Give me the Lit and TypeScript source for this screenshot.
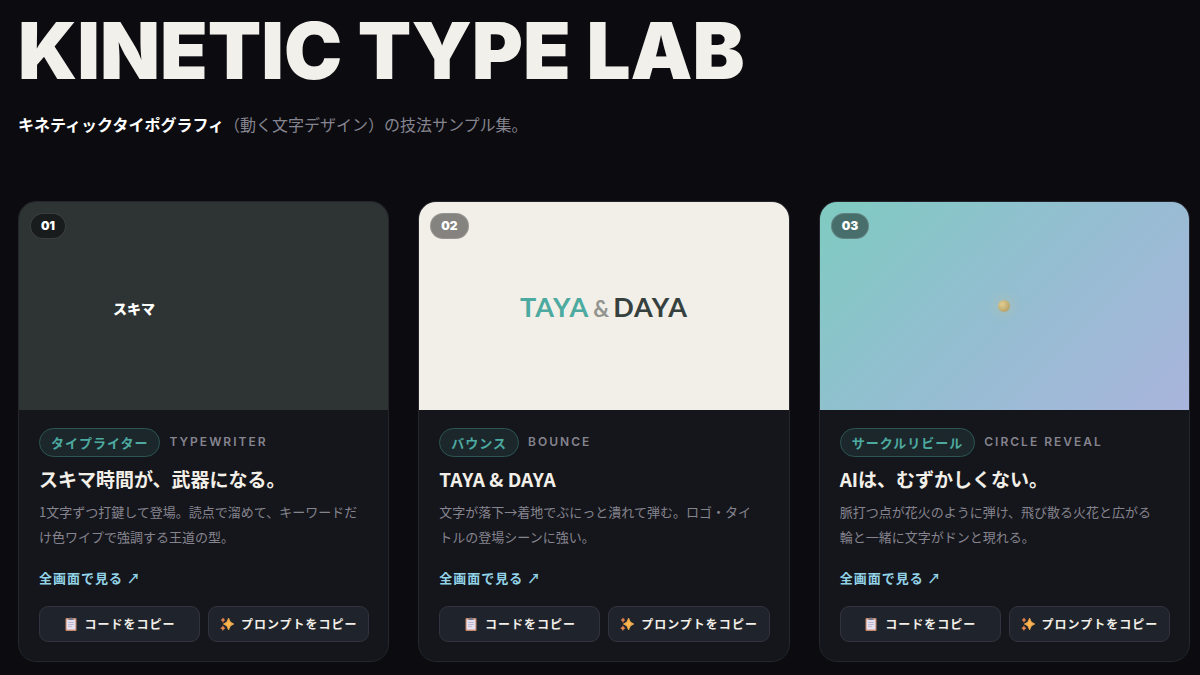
import { LitElement, html, css, svg, type TemplateResult } from "lit";
import { customElement, property } from "lit/decorators.js";

interface Sample {
  no: string;
  tag: string;
  label: string;
  title: string;
  text: string;
  theme: string;
  stage: TemplateResult;
}

const samples: Sample[] = [
  {
    no: "01",
    tag: "タイプライター",
    label: "TYPEWRITER",
    title: "スキマ時間が、武器になる。",
    text: "1文字ずつ打鍵して登場。読点で溜めて、キーワードだけ色ワイプで強調する王道の型。",
    theme: "slate",
    stage: html`<div class="typed">スキマ</div>`,
  },
  {
    no: "02",
    tag: "バウンス",
    label: "BOUNCE",
    title: "TAYA & DAYA",
    text: "文字が落下→着地でぶにっと潰れて弾む。ロゴ・タイトルの登場シーンに強い。",
    theme: "paper",
    stage: html`<div class="duo"><span class="first">TAYA</span><span class="amp">&amp;</span><span>DAYA</span></div>`,
  },
  {
    no: "03",
    tag: "サークルリビール",
    label: "CIRCLE REVEAL",
    title: "AIは、むずかしくない。",
    text: "脈打つ点が花火のように弾け、飛び散る火花と広がる輪と一緒に文字がドンと現れる。",
    theme: "sky",
    stage: html`<div class="dot"></div>`,
  },
];

const clipboard = html`<svg class="icon" viewBox="0 0 14 14" aria-hidden="true">
  ${svg`<rect x="1.5" y="1" width="11" height="13" rx="1" fill="#c98a6c"/>
  <rect x="2.6" y="2.4" width="8.8" height="10.2" fill="#e6dff0"/>
  <path d="M4.4 2.9V1.7h1.5a1.1 1.1 0 0 1 2.2 0h1.5v1.2z" fill="#77768a"/>
  <path d="M4.2 5.5h5.6M4.2 7.5h5.6M4.2 9.5h3.6" stroke="#aaa3bd" stroke-width=".7"/>`}
</svg>`;

const sparkles = html`<svg class="icon" viewBox="0 0 14 14" aria-hidden="true">
  ${svg`<path d="M8.6 1.2Q9.3 6 13.7 7 9.3 8 8.6 12.8 7.9 8 3.5 7 7.9 6 8.6 1.2z" fill="#fdb44f" stroke="#fdb44f" stroke-width=".9" stroke-linejoin="round"/>
  <path d="M3 .8Q3.3 2.7 5 3.1 3.3 3.5 3 5.4 2.7 3.5 1 3.1 2.7 2.7 3 .8z" fill="#f28b50" stroke="#f28b50" stroke-width=".4"/>
  <path d="M2.9 8.8Q3.2 10.8 5.2 11.2 3.2 11.6 2.9 13.6 2.6 11.6.6 11.2 2.6 10.8 2.9 8.8z" fill="#f28b50" stroke="#f28b50" stroke-width=".4"/>`}
</svg>`;

@customElement("sample-card")
export class SampleCard extends LitElement {
  @property({ attribute: false }) sample!: Sample;

  static styles = css`
    :host {
      display: block;
      min-width: 0;
    }
    .card {
      box-sizing: border-box;
      height: 100%;
      border: 1px solid #25262d;
      border-radius: 18px;
      background: #15161b;
      overflow: hidden;
    }
    .preview {
      position: relative;
      aspect-ratio: 16 / 9;
      display: grid;
      align-items: center;
    }
    .slate { background: #2d3433; }
    .paper { background: #f2efe8; }
    .sky { background: linear-gradient(135deg, #7fcbc1 0%, #92bfd0 45%, #a9b4dc 100%); }
    .badge {
      position: absolute;
      top: 11px;
      left: 11px;
      padding: 0 10px;
      border: 1px solid rgba(255, 255, 255, 0.14);
      border-radius: 13px;
      background: rgba(0, 0, 0, 0.45);
      color: #fff;
      font: 900 12px/24px Inter, sans-serif;
    }
    .typed {
      padding-left: 94px;
      padding-top: 4px;
      color: #fff;
      font-size: 14px;
      font-weight: 900;
    }
    .duo {
      display: flex;
      justify-content: center;
      align-items: baseline;
      gap: 4px;
      padding-top: 5px;
      color: #36413f;
      font: 700 27px/32px Lato, sans-serif;
      letter-spacing: 1px;
    }
    .first { color: #4caaa0; }
    .amp { color: #92948f; font-size: 22px; letter-spacing: 0; }
    .dot {
      justify-self: center;
      width: 12px;
      height: 12px;
      border-radius: 50%;
      background: radial-gradient(circle at 35% 35%, #e3cd90, #bfab70 60%, #a59668);
      box-shadow: 0 0 12px 2px rgba(215, 200, 130, 0.35);
    }
    .body {
      padding: 18px 19px 19px 20px;
    }
    .meta {
      display: flex;
      align-items: center;
      gap: 9px;
    }
    .tag {
      padding: 0 11px;
      border: 1px solid #2b5653;
      border-radius: 15px;
      background: #1c272c;
      color: #4caaa0;
      font-size: 13px;
      line-height: 27px;
      font-weight: 700;
      letter-spacing: 1px;
      white-space: nowrap;
    }
    .label {
      color: #85848f;
      font: 600 12px/20px Inter, sans-serif;
      letter-spacing: 2px;
      white-space: nowrap;
    }
    h2 {
      margin: 7px 0 5px;
      color: #f2efe8;
      font-size: 19px;
      line-height: 30px;
      font-weight: 700;
    }
    p {
      margin: 0;
      max-width: 320px;
      color: #85848f;
      font-size: 13px;
      line-height: 25px;
    }
    a {
      display: inline-block;
      margin-top: 18px;
      color: #93d3e8;
      font-size: 13px;
      line-height: 22px;
      font-weight: 700;
      letter-spacing: 1px;
      text-decoration: none;
    }
    .actions {
      display: grid;
      grid-template-columns: 1fr 1fr;
      gap: 8px;
      margin-top: 17px;
    }
    button {
      display: flex;
      align-items: center;
      justify-content: center;
      gap: 7px;
      height: 36px;
      padding: 0;
      border: 1px solid #32333e;
      border-radius: 9px;
      background: #1f232b;
      color: #f2efe8;
      font: 700 12px/20px "Noto Sans CJK JP", sans-serif;
      letter-spacing: 1px;
      white-space: nowrap;
    }
    .icon {
      width: 14px;
      height: 14px;
    }
  `;

  render() {
    const s = this.sample;
    return html`
      <article class="card">
        <div class="preview ${s.theme}">
          <span class="badge">${s.no}</span>
          ${s.stage}
        </div>
        <div class="body">
          <div class="meta"><span class="tag">${s.tag}</span><span class="label">${s.label}</span></div>
          <h2>${s.title}</h2>
          <p>${s.text}</p>
          <a href="#sample-${s.no}">全画面で見る ↗</a>
          <div class="actions">
            <button type="button">${clipboard}<span>コードをコピー</span></button>
            <button type="button">${sparkles}<span>プロンプトをコピー</span></button>
          </div>
        </div>
      </article>
    `;
  }
}

@customElement("app-root")
export class AppRoot extends LitElement {
  static styles = css`
    :host {
      display: block;
      box-sizing: border-box;
      min-height: 100vh;
      padding: 12px 10px 13px 18px;
      background: #0b0b10;
      font-family: "Noto Sans CJK JP", sans-serif;
    }
    h1 {
      margin: 0;
      color: #f2f0ea;
      font: 900 78px/78px Inter, sans-serif;
      font-optical-sizing: none;
    }
    .lead {
      margin: 19px 0 62px;
      color: #85848f;
      font-size: 16px;
      line-height: 30px;
    }
    strong {
      color: #fff;
      font-weight: 700;
    }
    .grid {
      display: grid;
      grid-template-columns: repeat(3, minmax(0, 1fr));
      gap: 29px;
    }
  `;

  render() {
    return html`
      <header>
        <h1>KINETIC TYPE LAB</h1>
        <p class="lead"><strong>キネティックタイポグラフィ</strong>（動く文字デザイン）の技法サンプル集。</p>
      </header>
      <main class="grid">
        ${samples.map((s) => html`<sample-card .sample=${s}></sample-card>`)}
      </main>
    `;
  }
}
